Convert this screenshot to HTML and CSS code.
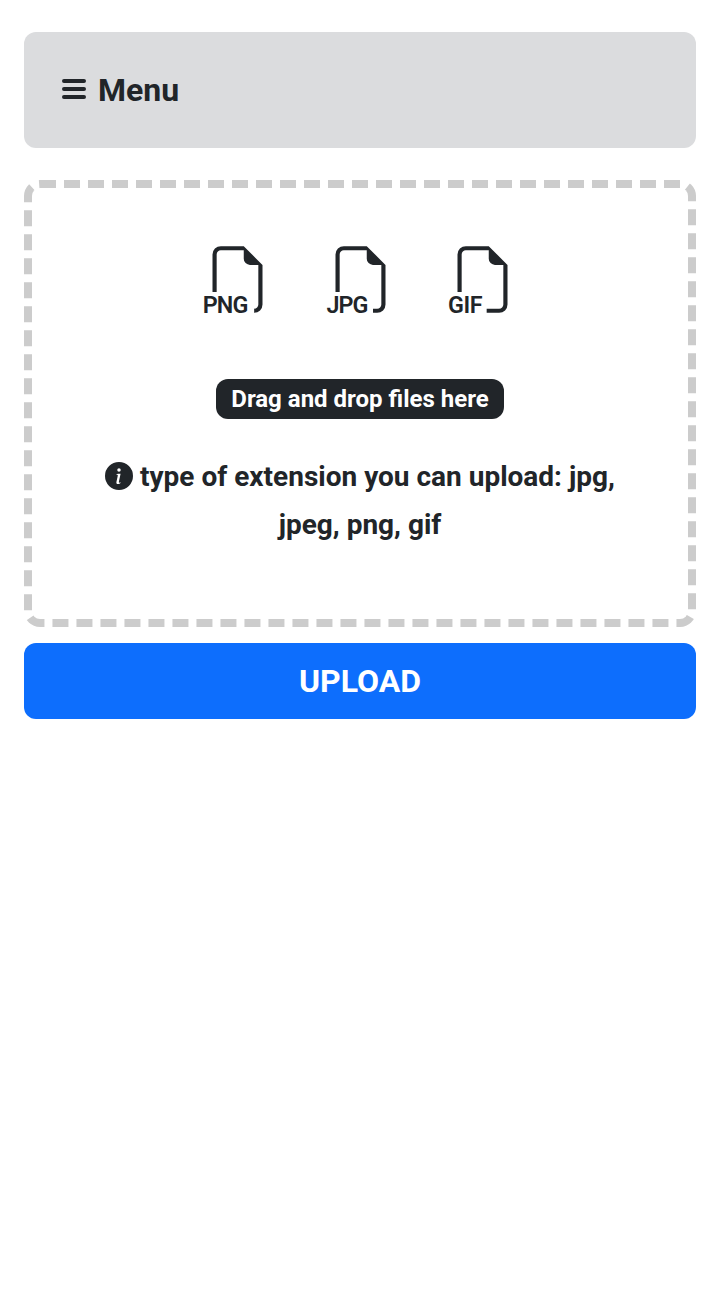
FILE: index.html
```html
<!DOCTYPE html>
<html lang="en">
<head>
<meta charset="utf-8">
<title>Upload</title>
<link rel="stylesheet" href="styles.css">
</head>
<body>
<nav class="menu">
  <svg class="bars" viewBox="0 0 24 24"><path d="M2 4H22M2 12H22M2 20H22"/></svg>
  <span>Menu</span>
</nav>
<main class="dropzone">
  <div class="files">
    <svg class="file" viewBox="-1 -1 18 18"><path d="M14 4.5V14a2 2 0 0 1-2 2v-1a1 1 0 0 0 1-1V4.5h-2A1.5 1.5 0 0 1 9.5 3V1H4a1 1 0 0 0-1 1v9H2V2a2 2 0 0 1 2-2h5.5z"/><text x="-.35" y="16.05" textLength="10.95">PNG</text></svg>
    <svg class="file" viewBox="-1 -1 18 18"><path d="M14 4.5V14a2 2 0 0 1-2 2h-1v-1h1a1 1 0 0 0 1-1V4.5h-2A1.5 1.5 0 0 1 9.5 3V1H4a1 1 0 0 0-1 1v9H2V2a2 2 0 0 1 2-2h5.5z"/><text x="-.15" y="16.05" textLength="10.05">JPG</text></svg>
    <svg class="file" viewBox="-1 -1 18 18"><path d="M14 4.5V14a2 2 0 0 1-2 2H9v-1h3a1 1 0 0 0 1-1V4.5h-2A1.5 1.5 0 0 1 9.5 3V1H4a1 1 0 0 0-1 1v9H2V2a2 2 0 0 1 2-2h5.5z"/><text x="-.3" y="16.05" textLength="8.3">GIF</text></svg>
  </div>
  <span class="badge">Drag and drop files here</span>
  <p class="hint"><svg class="info" viewBox="0 0 16 16"><path d="M8 16A8 8 0 1 0 8 0a8 8 0 0 0 0 16m.93-9.412-1 4.705c-.07.34.029.533.304.533.194 0 .487-.07.686-.246l-.088.416c-.287.346-.92.598-1.465.598-.703 0-1.002-.422-.808-1.319l.738-3.468c.064-.293.006-.399-.287-.47l-.451-.081.082-.381 2.29-.287zM8 5.5a1 1 0 1 1 0-2 1 1 0 0 1 0 2"/></svg> type of extension you can upload: jpg, jpeg, png, gif</p>
</main>
<button class="upload">UPLOAD</button>
</body>
</html>
```
FILE: styles.css
```css
* { box-sizing: border-box; }
body { margin: 0; padding: 32px 24px; background: #fff; color: #212529; font-family: Roboto, sans-serif; font-weight: 700; }
.menu { height: 116px; padding: 0 38px; display: flex; align-items: center; gap: 12px; border-radius: 12px; background: #dbdcde; font-size: 32px; }
.bars { width: 24px; height: 24px; margin-bottom: 2px; fill: none; stroke: #212529; stroke-width: 4; stroke-linecap: round; }
.dropzone { height: 447px; margin: 32px 0 16px; padding: 53.83px 64px 0; display: flex; flex-direction: column; align-items: center; border: 8px dashed #ccc; border-radius: 16px; text-align: center; }
.files { display: flex; gap: 47.67px; }
.file { width: 75px; height: 75px; fill: #212529; }
.file text { font-size: 5.6px; font-weight: 600; }
.badge { height: 40px; margin-top: 62.17px; padding: 0 15px; border-radius: 12px; background: #212529; color: #fff; font-size: 24px; line-height: 40px; white-space: nowrap; }
.hint { width: 528px; margin: 34px 0 0; font-size: 28px; line-height: 48px; }
.info { width: 28px; height: 28px; vertical-align: -4px; fill: #212529; }
.upload { display: block; width: 100%; height: 76px; border: 0; border-radius: 12px; background: #0d6efd; color: #fff; font: 700 32px Roboto, sans-serif; }
```
